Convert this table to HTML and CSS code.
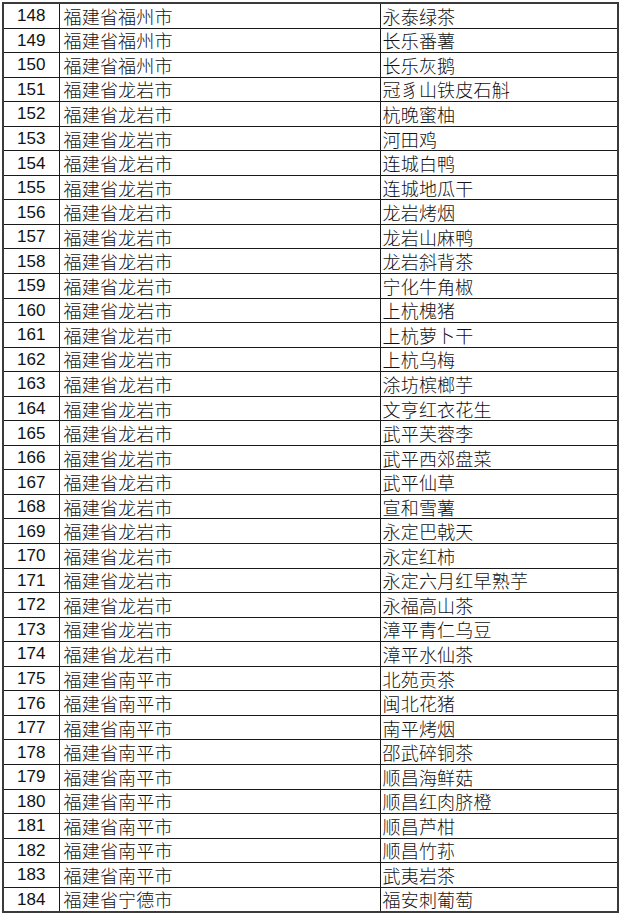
FILE: index.html
```html
<!DOCTYPE html>
<html lang="zh">
<head>
<meta charset="utf-8">
<title>福建省地理标志产品</title>
<link rel="stylesheet" href="styles.css">
</head>
<body>
<table class="list">
<colgroup><col class="c-no"><col class="c-region"><col class="c-name"></colgroup>
<tbody>
<tr><td class="no">148</td><td class="region">福建省福州市</td><td class="name">永泰绿茶</td></tr>
<tr><td class="no">149</td><td class="region">福建省福州市</td><td class="name">长乐番薯</td></tr>
<tr><td class="no">150</td><td class="region">福建省福州市</td><td class="name">长乐灰鹅</td></tr>
<tr><td class="no">151</td><td class="region">福建省龙岩市</td><td class="name">冠豸山铁皮石斛</td></tr>
<tr><td class="no">152</td><td class="region">福建省龙岩市</td><td class="name">杭晚蜜柚</td></tr>
<tr><td class="no">153</td><td class="region">福建省龙岩市</td><td class="name">河田鸡</td></tr>
<tr><td class="no">154</td><td class="region">福建省龙岩市</td><td class="name">连城白鸭</td></tr>
<tr><td class="no">155</td><td class="region">福建省龙岩市</td><td class="name">连城地瓜干</td></tr>
<tr><td class="no">156</td><td class="region">福建省龙岩市</td><td class="name">龙岩烤烟</td></tr>
<tr><td class="no">157</td><td class="region">福建省龙岩市</td><td class="name">龙岩山麻鸭</td></tr>
<tr><td class="no">158</td><td class="region">福建省龙岩市</td><td class="name">龙岩斜背茶</td></tr>
<tr><td class="no">159</td><td class="region">福建省龙岩市</td><td class="name">宁化牛角椒</td></tr>
<tr><td class="no">160</td><td class="region">福建省龙岩市</td><td class="name">上杭槐猪</td></tr>
<tr><td class="no">161</td><td class="region">福建省龙岩市</td><td class="name">上杭萝卜干</td></tr>
<tr><td class="no">162</td><td class="region">福建省龙岩市</td><td class="name">上杭乌梅</td></tr>
<tr><td class="no">163</td><td class="region">福建省龙岩市</td><td class="name">涂坊槟榔芋</td></tr>
<tr><td class="no">164</td><td class="region">福建省龙岩市</td><td class="name">文亨红衣花生</td></tr>
<tr><td class="no">165</td><td class="region">福建省龙岩市</td><td class="name">武平芙蓉李</td></tr>
<tr><td class="no">166</td><td class="region">福建省龙岩市</td><td class="name">武平西郊盘菜</td></tr>
<tr><td class="no">167</td><td class="region">福建省龙岩市</td><td class="name">武平仙草</td></tr>
<tr><td class="no">168</td><td class="region">福建省龙岩市</td><td class="name">宣和雪薯</td></tr>
<tr><td class="no">169</td><td class="region">福建省龙岩市</td><td class="name">永定巴戟天</td></tr>
<tr><td class="no">170</td><td class="region">福建省龙岩市</td><td class="name">永定红柿</td></tr>
<tr><td class="no">171</td><td class="region">福建省龙岩市</td><td class="name">永定六月红早熟芋</td></tr>
<tr><td class="no">172</td><td class="region">福建省龙岩市</td><td class="name">永福高山茶</td></tr>
<tr><td class="no">173</td><td class="region">福建省龙岩市</td><td class="name">漳平青仁乌豆</td></tr>
<tr><td class="no">174</td><td class="region">福建省龙岩市</td><td class="name">漳平水仙茶</td></tr>
<tr><td class="no">175</td><td class="region">福建省南平市</td><td class="name">北苑贡茶</td></tr>
<tr><td class="no">176</td><td class="region">福建省南平市</td><td class="name">闽北花猪</td></tr>
<tr><td class="no">177</td><td class="region">福建省南平市</td><td class="name">南平烤烟</td></tr>
<tr><td class="no">178</td><td class="region">福建省南平市</td><td class="name">邵武碎铜茶</td></tr>
<tr><td class="no">179</td><td class="region">福建省南平市</td><td class="name">顺昌海鲜菇</td></tr>
<tr><td class="no">180</td><td class="region">福建省南平市</td><td class="name">顺昌红肉脐橙</td></tr>
<tr><td class="no">181</td><td class="region">福建省南平市</td><td class="name">顺昌芦柑</td></tr>
<tr><td class="no">182</td><td class="region">福建省南平市</td><td class="name">顺昌竹荪</td></tr>
<tr><td class="no">183</td><td class="region">福建省南平市</td><td class="name">武夷岩茶</td></tr>
<tr><td class="no">184</td><td class="region">福建省宁德市</td><td class="name">福安刺葡萄</td></tr>
</tbody>
</table>
</body>
</html>
```

FILE: styles.css
```css
html, body {
  margin: 0;
  padding: 0;
  background: #ffffff;
}

body {
  padding: 2px 0 0 2px;
}

.list {
  border-collapse: collapse;
  table-layout: fixed;
  width: 615px;
  border: 2px solid #3a3a3a;
  color: #111111;
}

.c-no { width: 56px; }
.c-region { width: 321px; }
.c-name { width: 238px; }

.list tr {
  height: 24.55px;
}

.list td {
  border: 1px solid #1a1a1a;
  padding: 0;
  height: 23.55px;
  white-space: nowrap;
  overflow: hidden;
  vertical-align: middle;
  line-height: 1;
}

.list td.no {
  text-align: center;
  font-family: "Liberation Sans", Arial, sans-serif;
  font-size: 17px;
}

.list td.region,
.list td.name {
  font-family: "Noto Sans CJK SC", "Noto Sans", sans-serif;
  font-weight: 300;
  font-size: 18px;
  letter-spacing: 0.2px;
}

.list td.region {
  padding-left: 4px;
}

.list td.name {
  padding-left: 2px;
}
```
